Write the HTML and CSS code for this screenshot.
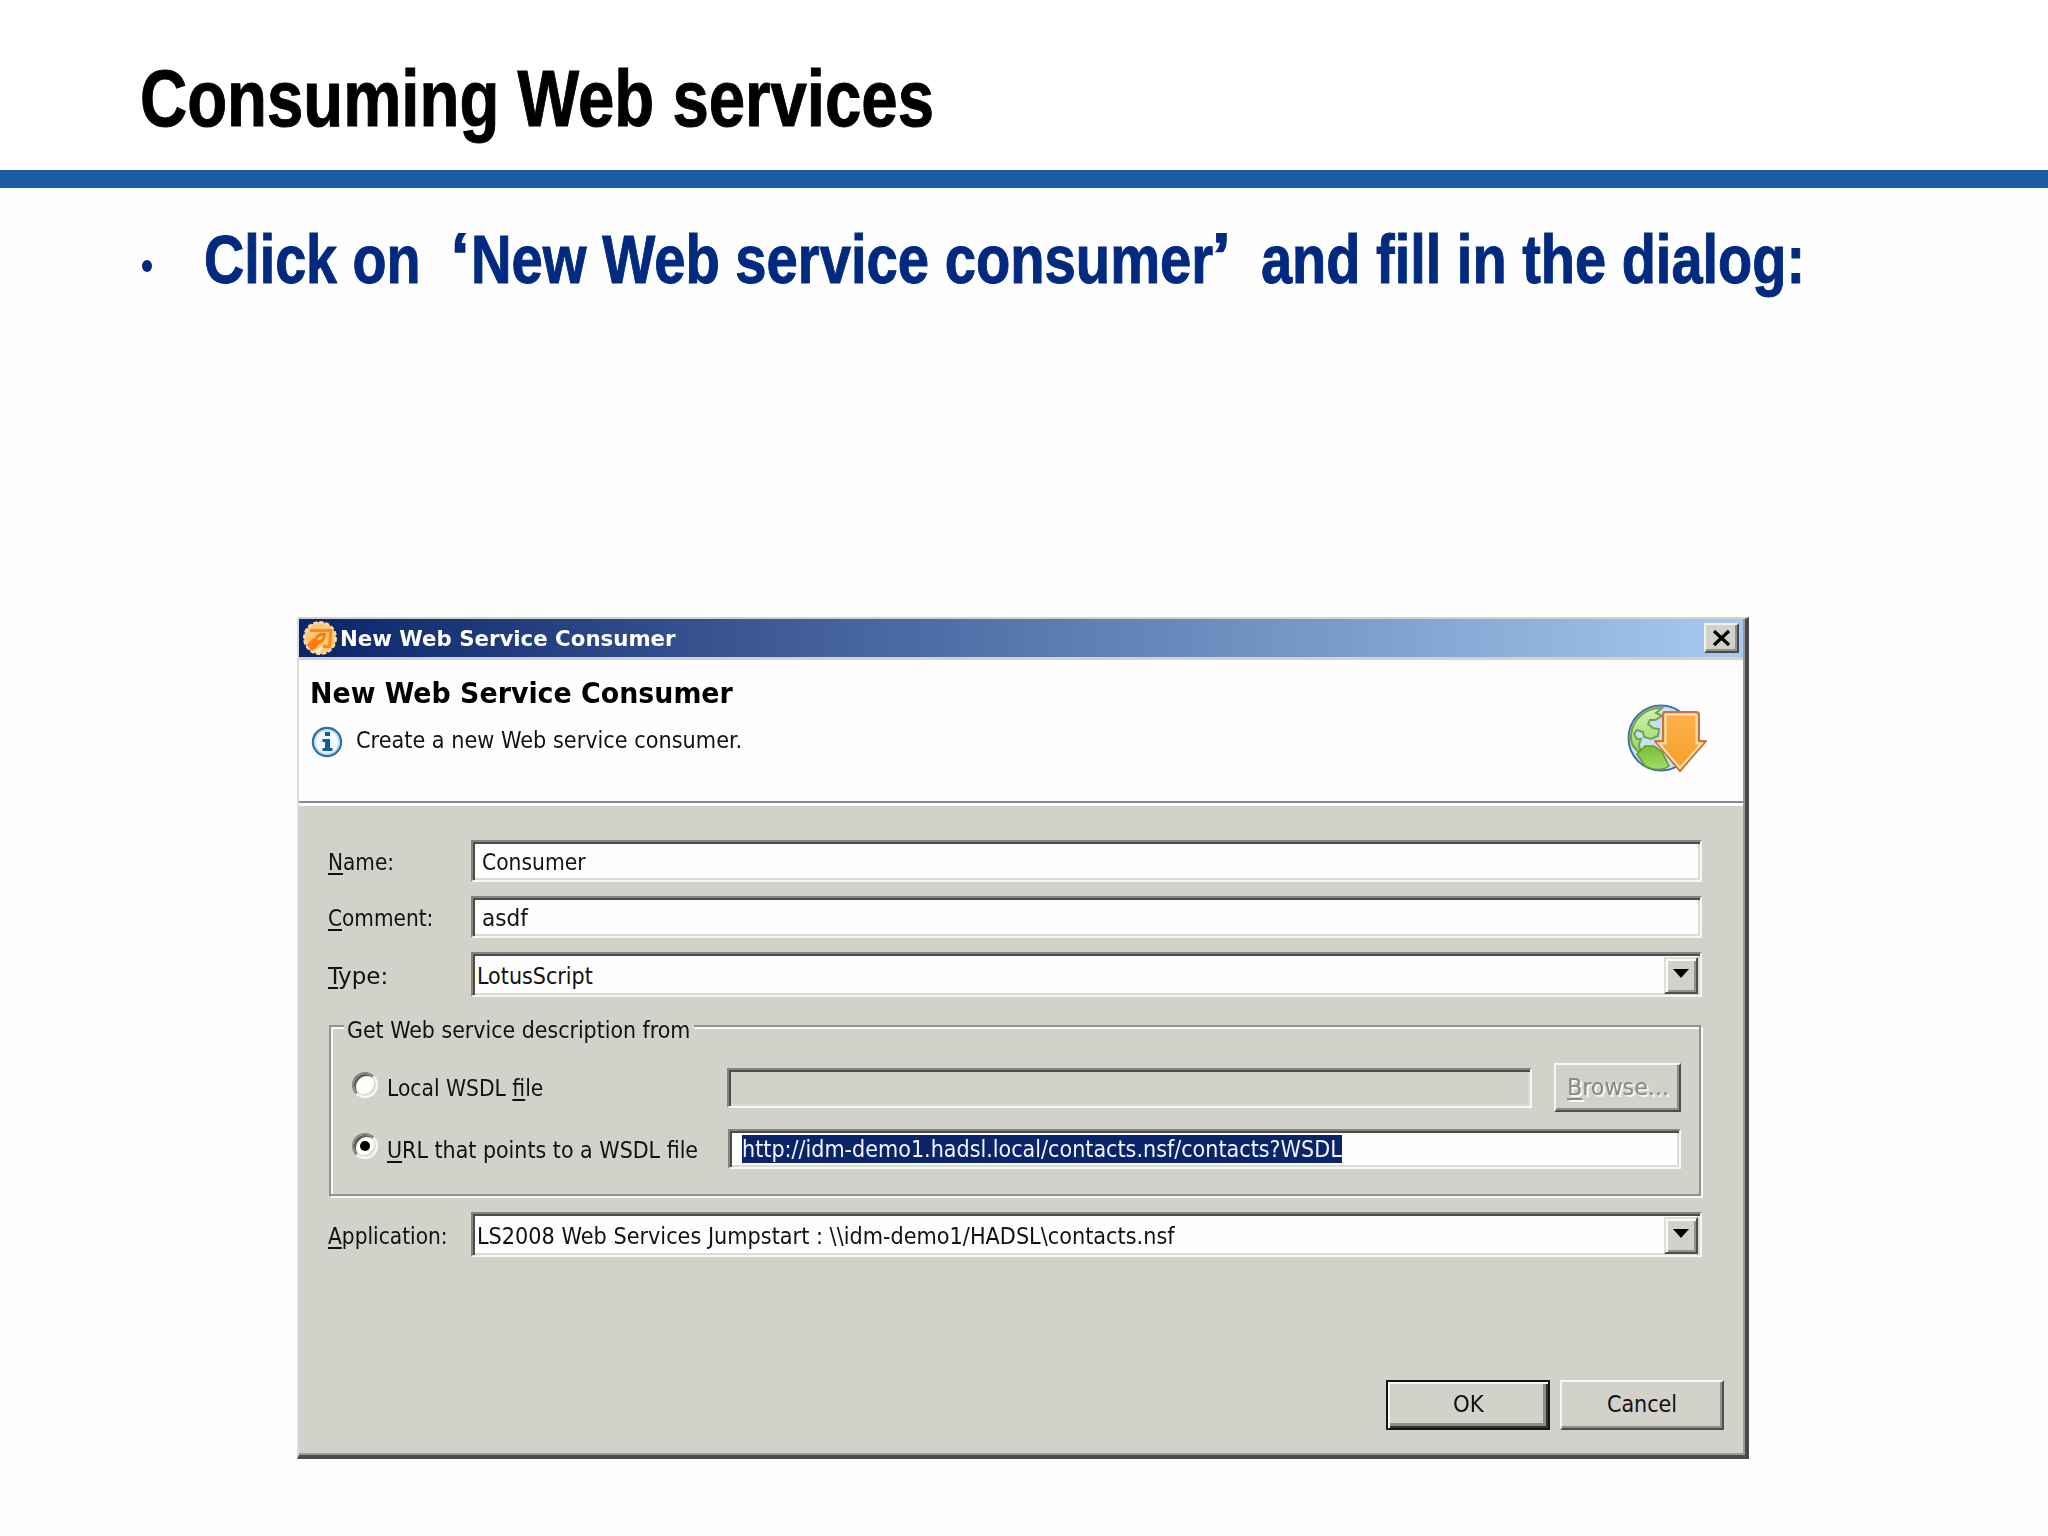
FILE: index.html
```html
<!DOCTYPE html>
<html lang="en">
<head>
    <meta charset="UTF-8">
    <title>Consuming Web services</title>
    <link rel="stylesheet" href="styles.css">
</head>
<body>
    <div class="slide-header">
        <h1><span class="fit" data-width="794">Consuming Web services</span></h1>
    </div>

    <div class="bullet-line">
        <span class="bullet"></span>
        <span class="fit" data-width="217">Click on</span>
        <span class="quote quote-open">‘</span>
        <span class="fit" data-width="742">New Web service consumer</span>
        <span class="quote quote-close">’</span>
        <span class="fit" data-width="544">and fill in the dialog:</span>
    </div>

    <div class="dialog">
        <div class="titlebar">
            <svg class="app-icon" viewBox="0 0 36 36">
                <circle cx="18" cy="18" r="16" fill="#ffc572"/>
                <circle cx="18" cy="18" r="15.500" fill="none" stroke="#f6dba4" stroke-width="3" stroke-dasharray="4 2"/>
                <path d="M8 10.500h21l-1.500 16H21" fill="none" stroke="#ff8a1c" stroke-width="3"/>
                <path d="M5 25l5-6 3-1c1-4 5-6 11-5 0 6-3 10-7 11l-2 3-5 4z" fill="#ff7c0c"/>
                <path d="M15 20c1-3 4-4 6-4-1 3-3 5-6 4z" fill="#ffd49a"/>
                <path d="M12 31c3-1 6-3 8-6 1 4-1 7-4 8z" fill="#fff0c8"/>
            </svg>
            <span class="fit title-text" data-width="336">New Web Service Consumer</span>
            <div class="close">
                <svg width="20" height="18" viewBox="0 0 20 18"><path d="M2 2l15 14M17 2L2 16" stroke="#000" stroke-width="3.2"/></svg>
            </div>
        </div>

        <div class="banner">
            <div class="banner-text">
                <h2><span class="fit" data-width="423">New Web Service Consumer</span></h2>
                <div class="message">
                    <svg width="32" height="32" viewBox="0 0 32 32">
                        <circle cx="16" cy="16" r="14" fill="#f2fbff" stroke="#2c72a8" stroke-width="2.4"/>
                        <circle cx="16" cy="16" r="12" fill="none" stroke="#b9e0f3" stroke-width="1.5"/>
                        <path d="M14 6h5v4h-5zM11.500 13H19v9h2.500v3h-10v-3H14v-6h-2.500z" fill="#125d96"/>
                    </svg>
                    <span class="fit" data-width="386">Create a new Web service consumer.</span>
                </div>
            </div>
            <svg class="globe" width="82" height="72" viewBox="0 0 82 72">
                <defs>
                    <linearGradient id="land" x1="0" y1="0" x2="0" y2="1">
                        <stop offset="0" stop-color="#d3f3ae"/>
                        <stop offset="1" stop-color="#9bd266"/>
                    </linearGradient>
                    <linearGradient id="land-south" x1="0" y1="0" x2="0" y2="1">
                        <stop offset="0" stop-color="#78bd38"/>
                        <stop offset="1" stop-color="#a4dc62"/>
                    </linearGradient>
                    <linearGradient id="arrow" x1="0" y1="0" x2="0" y2="1">
                        <stop offset="0" stop-color="#ffb04e"/>
                        <stop offset="1" stop-color="#f2a029"/>
                    </linearGradient>
                </defs>
                <circle cx="35" cy="35" r="32.500" fill="#c9dcf8" stroke="#4a6fa5" stroke-width="2"/>
                <path d="M36 5l-6 5 6 3-7 4-5 0-2 4 5 4 6 1-1 7-7 3-7-2-1-5-6-2-3 4 3 5 4 0-2 6 2 8C8 46 4 39 5 31 7 16 20 4 36 5z" fill="url(#land)" stroke="#6ea647" stroke-width="2"/>
                <path d="M11 51l8-8 9 0 8 6 7 14c-7 5-17 4-24 0z" fill="url(#land-south)" stroke="#5c9c34" stroke-width="1.500"/>
                <path d="M38 9h32q3 0 3 3v26h7L54 68 29 38h8V12q0-3 2-3z" fill="url(#arrow)" stroke="#c67343" stroke-width="2" stroke-linejoin="round"/>
                <path d="M40 11.500h28q2.500 0 2.500 2V40.500h5L54 65 33 40.500h6.500V12z" fill="none" stroke="#ffe2a6" stroke-width="2"/>
            </svg>
        </div>

        <div class="form">
            <div class="row">
                <div class="label"><span class="fit" data-width="66"><u>N</u>ame:</span></div>
                <div class="field"><span class="fit" data-width="104">Consumer</span></div>
            </div>
            <div class="row">
                <div class="label"><span class="fit" data-width="105"><u>C</u>omment:</span></div>
                <div class="field"><span class="fit" data-width="46">asdf</span></div>
            </div>
            <div class="row row-select">
                <div class="label"><span class="fit" data-width="60"><u>T</u>ype:</span></div>
                <div class="field select">
                    <span class="fit" data-width="116">LotusScript</span>
                    <span class="drop"></span>
                </div>
            </div>

            <div class="group">
                <div class="legend"><span class="fit" data-width="343">Get Web service description from</span></div>
                <div class="source">
                    <span class="radio"></span>
                    <div class="source-label"><span class="fit" data-width="156">Local WSDL <u>f</u>ile</span></div>
                    <div class="field disabled"></div>
                    <div class="button browse"><span class="fit" data-width="102"><u>B</u>rowse...</span></div>
                </div>
                <div class="source source-url">
                    <span class="radio checked"></span>
                    <div class="source-label"><span class="fit" data-width="311"><u>U</u>RL that points to a WSDL file</span></div>
                    <div class="field"><span class="selection"><span class="fit" data-width="600">http://idm-demo1.hadsl.local/contacts.nsf/contacts?WSDL</span></span></div>
                </div>
            </div>

            <div class="row row-select row-app">
                <div class="label"><span class="fit" data-width="120"><u>A</u>pplication:</span></div>
                <div class="field select">
                    <span class="fit" data-width="698">LS2008 Web Services Jumpstart : \\idm-demo1/HADSL\contacts.nsf</span>
                    <span class="drop"></span>
                </div>
            </div>
        </div>

        <div class="actions">
            <div class="button default"><span class="fit" data-width="31">OK</span></div>
            <div class="button"><span class="fit" data-width="70">Cancel</span></div>
        </div>
    </div>

    <script src="fit.js"></script>
</body>
</html>
```
FILE: styles.css
```css
* { margin: 0; padding: 0; box-sizing: border-box; }
body {
    width: 2048px;
    height: 1536px;
    overflow: hidden;
    background: #fefefe;
    font-family: "Liberation Sans", Arial, sans-serif;
}
.fit {
    display: inline-block;
    white-space: pre;
    transform-origin: left center;
    flex: none;
}

/* slide */
.slide-header {
    height: 188px;
    padding: 27px 0 0 140px;
    border-bottom: 18px solid #1b5ca3;
    background: #fff;
}
.slide-header h1 {
    font-size: 79px;
    line-height: 143px;
    color: #000;
    -webkit-text-stroke: 1px #000;
}
.bullet-line {
    display: flex;
    align-items: center;
    height: 100px;
    margin-top: 21px;
    padding-left: 142px;
    font-size: 68px;
    font-weight: bold;
    line-height: 101px;
    color: #002a7f;
    -webkit-text-stroke: 1px #002a7f;
}
.bullet {
    width: 10px;
    height: 12px;
    margin: 14px 52px 0 0;
    border-radius: 50%;
    background: #002a7f;
}
.quote {
    flex: none;
    height: 100px;
    font-size: 62px;
    line-height: 92px;
    -webkit-text-stroke-width: 2px;
}
.quote-open { width: 50px; padding-left: 31px; }
.quote-close { width: 48px; }

/* dialog */
.dialog {
    display: flex;
    flex-direction: column;
    width: 1452px;
    height: 842px;
    margin: 308px 0 0 297px;
    border: solid;
    border-width: 2px 4px 4px 2px;
    border-color: #d2d1cc #4a494c #4d4d49 #dedddb;
    box-shadow: inset -2px -2px #9b9a96;
    background: #d2d1ca;
    font-family: "DejaVu Sans Condensed", "DejaVu Sans", Tahoma, sans-serif;
    font-size: 23px;
    color: #111;
}
.dialog u {
    text-decoration-thickness: 2px;
    text-underline-offset: 3px;
    text-decoration-skip-ink: none;
}
.titlebar {
    display: flex;
    align-items: center;
    height: 38px;
    margin-right: 2px;
    padding: 0 4px 0 3px;
    background: linear-gradient(90deg, #0a246a, #a6caf0);
}
.app-icon { width: 36px; height: 36px; margin-right: 2px; }
.title-text {
    color: #fff;
    font-size: 21px;
    font-weight: bold;
    padding-top: 1px;
}
.close {
    display: flex;
    align-items: center;
    justify-content: center;
    width: 35px;
    height: 30px;
    margin-left: auto;
    border: 2px solid;
    border-color: #f2f2ee #4b4a48 #4b4a48 #f2f2ee;
    box-shadow: inset -2px -2px #93928e;
    background: #d2d1ca;
}
.banner {
    display: flex;
    justify-content: space-between;
    height: 149px;
    margin-right: 2px;
    padding: 19px 35px 0 11px;
    border-top: 3px solid #d2d1cc;
    border-bottom: 3px solid #fff;
    background: #fefefe;
    box-shadow: inset 0 -2px #8b8a88;
}
.banner h2 {
    font-size: 28px;
    line-height: 30px;
    color: #000;
}
.message {
    display: flex;
    align-items: center;
    gap: 13px;
    margin: 17px 0 0 1px;
    line-height: 32px;
}
.message .fit { margin-top: -4px; }
.globe { margin-top: 24px; }

/* form */
.form { padding: 34px 43px 0 30px; }
.row {
    display: flex;
    height: 42px;
    margin-bottom: 14px;
    line-height: 42px;
}
.label { width: 142px; padding-top: 1px; margin-left: -1px; }
.row .label + .field { margin-left: 1px; }
.field {
    display: flex;
    align-items: center;
    flex: 1;
    padding: 2px 0 0 9px;
    border: 2px solid;
    border-color: #85847f #f7f7f3 #f7f7f3 #85847f;
    box-shadow: inset 2px 2px #4c4c49, inset -2px -2px #dcdbd5;
    background: #fefefe;
}
.row-select { height: 45px; line-height: 46px; margin-bottom: 21px; }
.row .select { padding: 1px 2px 0 4px; }
.select .fit { padding-top: 1px; }
.drop {
    display: flex;
    align-items: center;
    justify-content: center;
    width: 34px;
    height: 37px;
    margin-left: auto;
    border: 2px solid;
    border-color: #dfded9 #4f4e4b #4f4e4b #dfded9;
    box-shadow: inset 2px 2px #fafaf6, inset -2px -2px #92918d;
    background: #d2d1ca;
}
.drop::after {
    content: "";
    border: solid transparent;
    border-width: 9px 8px 0;
    border-top-color: #000;
    margin-top: -3px;
}
.group {
    height: 171px;
    margin: 28px 1px 16px 0;
    padding: 0 18px 0 21px;
    border: 2px solid #92918c;
    box-shadow: 2px 2px #f7f7f3, inset 2px 2px #f7f7f3;
}
.legend {
    width: 350px;
    height: 30px;
    margin: -12px 0 18px -8px;
    padding-left: 3px;
    line-height: 30px;
    background: #d2d1ca;
}
.source {
    display: flex;
    align-items: center;
    height: 49px;
    line-height: 40px;
}
.source .field { height: 40px; flex: none; width: 805px; }
.source .disabled { background: #d2d1ca; }
.source-url { height: 40px; margin-top: 17px; }
.source-url .field { width: 953px; padding: 0 0 0 12px; }
.source-label { width: 341px; margin-top: 1px; }
.radio {
    display: flex;
    align-items: center;
    justify-content: center;
    width: 26px;
    height: 26px;
    margin: -6px 9px 0 0;
    border: 2px solid;
    border-color: #85847f #f7f7f3 #f7f7f3 #85847f;
    border-radius: 50%;
    box-shadow: inset 2px 2px 1px #55544f, inset -2px -2px #dcdbd5;
    background: #fefefe;
}
.checked::after {
    content: "";
    width: 10px;
    height: 10px;
    border-radius: 50%;
    background: #000;
}
.selection {
    height: 28px;
    line-height: 29px;
    background: #0a246a;
    color: #f4f6ff;
}
.button {
    display: flex;
    align-items: center;
    justify-content: center;
    width: 164px;
    height: 50px;
    padding-bottom: 2px;
    border: 2px solid;
    border-color: #f7f7f3 #4f4e4b #4f4e4b #f7f7f3;
    box-shadow: inset -2px -2px #8e8d88;
    background: #d2d1ca;
}
.default {
    border-color: #151515;
    box-shadow: inset 2px 2px #f7f7f3, inset -2px -2px #33322f, inset -5px -5px #8e8d88;
}
.browse {
    width: 127px;
    height: 49px;
    margin-left: 22px;
    color: #8a8985;
    text-shadow: 2px 2px #f7f7f3;
}
.actions {
    display: flex;
    justify-content: flex-end;
    gap: 10px;
    margin: auto 21px 25px 0;
}
```
FILE: fit.js
```js
// Squeeze each text run to the width given in data-width
document.querySelectorAll('.fit').forEach(el => {
    const target = Number(el.dataset.width);
    const natural = el.offsetWidth;
    el.style.transform = `scaleX(${target / natural})`;
    el.style.marginRight = `${target - natural}px`;
});
```
